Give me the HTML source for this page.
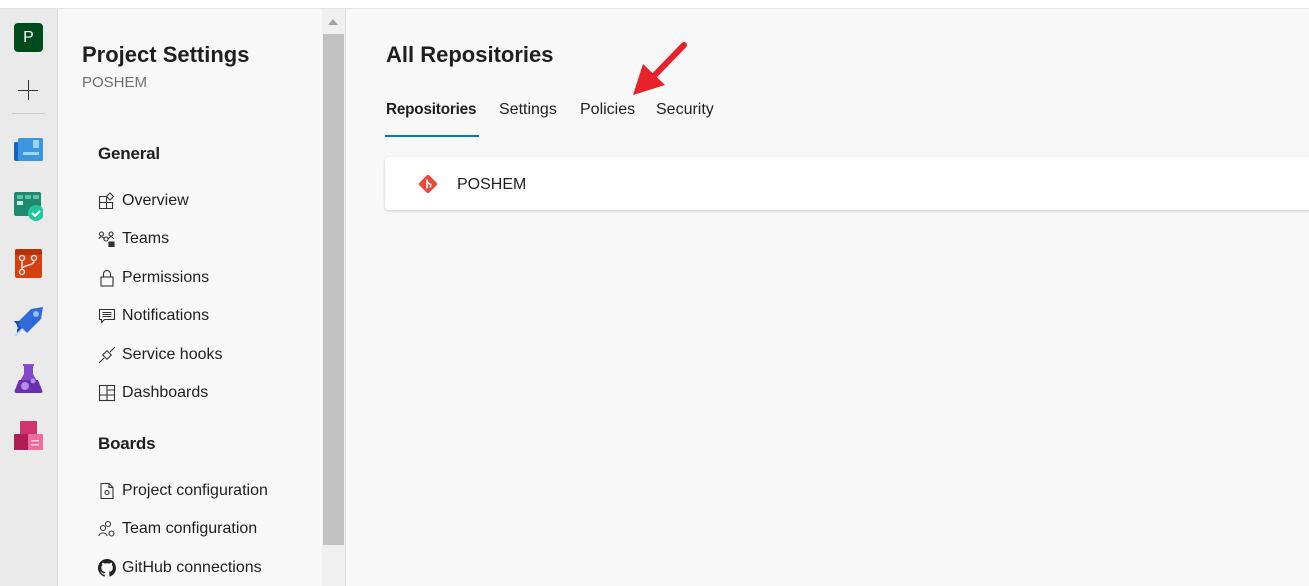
<!DOCTYPE html>
<html><head><meta charset="utf-8"><style>
*{margin:0;padding:0;box-sizing:border-box}
body{width:1309px;height:586px;overflow:hidden;background:#f8f8f8;font-family:"Segoe UI","Liberation Sans",sans-serif;color:#201f1e;position:relative}
.top{position:absolute;left:0;top:0;width:1309px;height:9px;background:#fff;border-bottom:1px solid #e4e4e4}
.rail{position:absolute;left:0;top:9px;width:58px;height:577px;background:#eaeaea;border-right:1px solid #dcdcdc}
.rail .ic{position:absolute;left:14px;width:29px;height:29px}
.panel{position:absolute;left:58px;top:9px;width:264px;height:577px;background:#f8f8f8}
.sb{position:absolute;left:322px;top:9px;width:24px;height:577px;background:#f0f0f0;border-right:1px solid #e0e0e0}
.thumb{position:absolute;left:1px;top:25px;width:21px;height:511px;background:#c1c1c1}
.arr{position:absolute;left:6px;top:10px;width:0;height:0;border-left:5px solid transparent;border-right:5px solid transparent;border-bottom:6px solid #a3a3a3}
.h1{position:absolute;left:82px;top:42px;font-size:22px;font-weight:bold}
.sub{position:absolute;left:82px;top:74px;font-size:15px;color:#707070}
.sec{position:absolute;left:98px;font-size:17px;font-weight:bold;letter-spacing:-0.2px}
.it{position:absolute;left:98px;font-size:16px;display:flex;align-items:center;height:22px}
.it svg{width:18px;height:18px;margin-right:6px}
.main .t{position:absolute;left:386px;top:42px;font-size:22px;font-weight:bold}
.tab{position:absolute;top:101px;font-size:16px}
.card{position:absolute;left:385px;top:157px;width:930px;height:53px;background:#fff;border-radius:4px;box-shadow:0 1px 3px rgba(0,0,0,.18)}
</style></head><body>
<div class="top"></div>
<div class="rail">
 <div style="position:absolute;left:14px;top:14px;width:29px;height:29px;background:#004b1c;border-radius:4px;color:#fff;font-size:16px;text-align:center;line-height:29px">P</div>
 <div style="position:absolute;left:18px;top:81px;width:20px;height:1px;background:#333"></div>
 <div style="position:absolute;left:28px;top:71px;width:1px;height:20px;background:#333"></div>
 <div style="position:absolute;left:12px;top:104px;width:33px;height:1px;background:#ccc"></div>
 <svg class="ic" style="top:126px" viewBox="0 0 29 29"><rect x="0" y="7" width="29" height="19" rx="2" fill="#1563c0"/><rect x="4" y="3" width="25" height="23" rx="2" fill="#3a96dd"/><path d="M19 5h6v8h-16v4h16v3H9v-7h10z" fill="#9fd4f7"/></svg>
 <svg class="ic" style="top:183px" viewBox="0 0 29 29"><rect x="0" y="0" width="27" height="24" rx="2" fill="#1f8a70"/><rect x="3" y="3" width="6" height="4" fill="#5ec2a4"/><rect x="11" y="3" width="6" height="4" fill="#5ec2a4"/><rect x="19" y="3" width="6" height="4" fill="#5ec2a4"/><rect x="3" y="9" width="6" height="4" fill="#c8f0e2"/><circle cx="22" cy="21" r="8" fill="#21c79a"/><path d="M18 21l3 3 5-5" stroke="#fff" stroke-width="2" fill="none"/></svg>
 <svg class="ic" style="top:240px" viewBox="0 0 29 29"><rect x="1" y="2" width="27" height="27" rx="2" fill="#d6400f"/><rect x="1" y="0" width="27" height="6" rx="2" fill="#b63208"/><circle cx="8" cy="9" r="2.5" stroke="#fdd" fill="none" stroke-width="1.5"/><circle cx="20" cy="9" r="2.5" stroke="#fdd" fill="none" stroke-width="1.5"/><circle cx="8" cy="23" r="2.5" stroke="#fdd" fill="none" stroke-width="1.5"/><path d="M8 12v8M20 12c0 5-12 4-12 8" stroke="#fdd" stroke-width="1.5" fill="none"/></svg>
 <svg class="ic" style="top:298px" viewBox="0 0 29 29"><path d="M29 0l-2 12-14 14-10-10L17 2z" fill="#2f6bd8"/><circle cx="22" cy="7" r="3" fill="#8fc1ff"/><path d="M3 16l5 5-5 5v-4l2-1-2-1z M0 14h7l-4 4z" fill="#1947b5"/><path d="M1 28l6-6 1 1-6 6z" fill="#b0d0ff"/></svg>
 <svg class="ic" style="top:355px" viewBox="0 0 29 29"><rect x="9" y="0" width="11" height="2" fill="#8b4bd6"/><path d="M10 2h9v8l9 16c1 2 0 3-2 3H3c-2 0-3-1-2-3l9-16z" fill="#8248c9"/><path d="M5 16h19l4 10c1 2 0 3-2 3H3c-2 0-3-1-2-3z" fill="#6a2fb0"/><circle cx="11" cy="22" r="4" fill="#b58ae8"/><circle cx="19" cy="17" r="2.5" fill="#b58ae8"/></svg>
 <svg class="ic" style="top:412px" viewBox="0 0 29 29"><rect x="6" y="0" width="17" height="14" rx="1" fill="#cf3470"/><rect x="0" y="13" width="15" height="16" rx="1" fill="#b01d55"/><rect x="14" y="13" width="15" height="16" rx="1" fill="#f06b9f"/><rect x="17" y="19" width="8" height="1.5" fill="#ffd0e2"/><rect x="17" y="23" width="8" height="1.5" fill="#ffd0e2"/></svg>
</div>
<div class="panel"></div>
<div class="sb"><div class="arr"></div><div class="thumb"></div></div>
<div class="h1">Project Settings</div>
<div class="sub">POSHEM</div>
<div class="sec" style="top:144px">General</div>
<div class="it" style="top:190px"><svg viewBox="0 0 18 18" fill="none" stroke="#333" stroke-width="1.1"><path d="M1.5 4.5h7v12h-7zM1.5 10.5h13v6h-6"/><path d="M12 1l3.5 3.5-3.5 3.5-3.5-3.5z"/></svg>Overview</div>
<div class="it" style="top:228px"><svg viewBox="0 0 18 18" fill="none" stroke="#333" stroke-width="1.1"><circle cx="3.5" cy="4" r="2"/><circle cx="13" cy="4" r="2"/><path d="M1 9c1-3 4-3 5 0M10.5 9c1-3 4-3 5 0"/><circle cx="8" cy="9" r="2"/><rect x="11" y="12" width="5" height="4.5" fill="#333"/></svg>Teams</div>
<div class="it" style="top:267px"><svg viewBox="0 0 18 18" fill="none" stroke="#333" stroke-width="1.1"><rect x="3" y="8" width="12" height="9"/><path d="M5.5 8V5a3.5 3.5 0 0 1 7 0v3"/></svg>Permissions</div>
<div class="it" style="top:305px"><svg viewBox="0 0 18 18" fill="none" stroke="#333" stroke-width="1.1"><path d="M1.5 2.5h15v10h-10l-3 3v-3h-2z"/><path d="M4.5 5.5h9M4.5 7.5h9M4.5 9.5h9"/></svg>Notifications</div>
<div class="it" style="top:344px"><svg viewBox="0 0 18 18" fill="none" stroke="#333" stroke-width="1.1"><path d="M1 17l5-5M17 1l-5 5"/><rect x="6" y="6" width="6" height="6" transform="rotate(45 9 9)"/></svg>Service hooks</div>
<div class="it" style="top:382px"><svg viewBox="0 0 18 18" fill="none" stroke="#333" stroke-width="1.1"><rect x="1.5" y="1.5" width="15" height="15"/><path d="M9 1.5v15M1.5 11h7.5M9 6h7.5M9 11h7.5"/></svg>Dashboards</div>
<div class="sec" style="top:434px">Boards</div>
<div class="it" style="top:480px"><svg viewBox="0 0 18 18" fill="none" stroke="#333" stroke-width="1.1"><path d="M3 1.5h8l4 4v11H3z"/><path d="M11 1.5v4h4"/><circle cx="9" cy="10.5" r="2"/></svg>Project configuration</div>
<div class="it" style="top:518px"><svg viewBox="0 0 18 18" fill="none" stroke="#333" stroke-width="1.1"><circle cx="10" cy="4" r="2.5"/><circle cx="5" cy="8" r="2.5"/><path d="M1 16c0-4 8-4 8 0"/><circle cx="13.5" cy="13.5" r="2.5"/></svg>Team configuration</div>
<div class="it" style="top:557px"><svg viewBox="0 0 16 16"><path fill="#222" d="M8 0C3.6 0 0 3.6 0 8c0 3.5 2.3 6.5 5.5 7.6.4.1.5-.2.5-.4v-1.4c-2.200.5-2.7-1-2.7-1-.4-.9-.9-1.2-.9-1.2-.7-.5.1-.5.1-.5.8.1 1.2.8 1.2.8.7 1.3 1.9.9 2.4.7.1-.5.3-.9.5-1.100-1.8-.2-3.6-.9-3.6-4 0-.9.3-1.6.8-2.100-.1-.2-.4-1 .1-2.1 0 0 .7-.2 2.2.8.6-.2 1.3-.3 2-.3s1.4.1 2 .3c1.5-1 2.2-.8 2.2-.8.4 1.1.2 1.9.1 2.1.5.6.8 1.3.8 2.1 0 3.1-1.9 3.7-3.6 3.9.3.3.5.8.5 1.5v2.2c0 .2.1.5.6.4C13.7 14.5 16 11.5 16 8c0-4.400-3.6-8-8-8z"/></svg>GitHub connections</div>
<div class="main">
 <div class="t">All Repositories</div>
 <div class="tab" style="left:386px;font-weight:bold;font-size:15.3px;letter-spacing:-0.2px">Repositories</div>
 <div style="position:absolute;left:385px;top:135px;width:94px;height:2px;background:#0078d4"></div>
 <div class="tab" style="left:499px">Settings</div>
 <div class="tab" style="left:580px">Policies</div>
 <div class="tab" style="left:656px">Security</div>
 <div class="card">
  <svg style="position:absolute;left:33px;top:17px" width="20" height="20" viewBox="0 0 20 20"><rect x="3" y="3" width="14" height="14" rx="2" transform="rotate(45 10 10)" fill="#e8483a"/><path d="M9 5.5v9M9 8l3.5 2.5v3" stroke="#fff" stroke-width="1.6" fill="none"/></svg>
  <div style="position:absolute;left:72px;top:19px;font-size:16px">POSHEM</div>
 </div>
 <svg style="position:absolute;left:0;top:0" width="1309" height="586" viewBox="0 0 1309 586"><path d="M684 45L652 78" stroke="#e8212b" stroke-width="6" stroke-linecap="round"/><path d="M633 95L643 64 665 85z" fill="#e8212b"/></svg>
</div>
</body></html>
